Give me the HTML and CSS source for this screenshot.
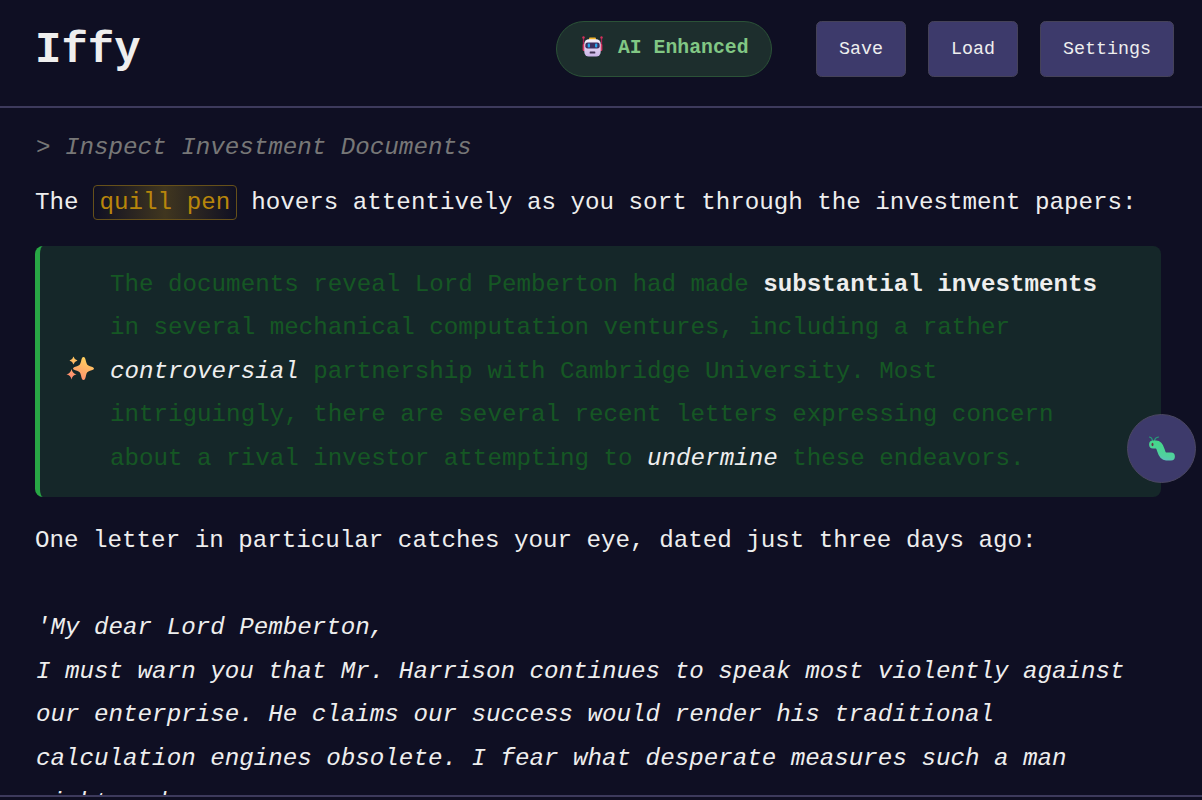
FILE: index.html
```html
<!DOCTYPE html>
<html lang="en">
<head>
<meta charset="utf-8">
<title>Iffy</title>
<link rel="stylesheet" href="styles.css">
</head>
<body>
<header class="header">
  <h1 class="title">Iffy</h1>
  <div class="controls">
    <div class="status">
      <svg class="robot" viewBox="0 0 27 24" aria-hidden="true">
        <defs><linearGradient id="face" x2="0" y2="1"><stop stop-color="#f6f0fa"/><stop offset="1" stop-color="#c9b2e6"/></linearGradient></defs>
        <path d="M4.500 3v12M22.500 3v12" stroke="#a81f50" stroke-width="1.300"/>
        <circle cx="4.500" cy="2.500" r="1.200" fill="#d3325b"/><circle cx="22.500" cy="2.500" r="1.200" fill="#d3325b"/>
        <rect x="3.700" y="9" width="3" height="7" rx="1" fill="#d63863"/><rect x="20.300" y="9" width="3" height="7" rx="1" fill="#d63863"/>
        <rect x="10" y="2.500" width="7" height="3" rx="1" fill="#f5b52a"/>
        <rect x="5.300" y="4.200" width="16.400" height="17.300" rx="4.500" fill="url(#face)"/>
        <rect x="6.300" y="7.500" width="14.400" height="6" rx="2.300" fill="#3c3060"/>
        <rect x="8.700" y="8.600" width="2.300" height="3.800" rx="1" fill="#27a8ef"/><rect x="16" y="8.600" width="2.300" height="3.800" rx="1" fill="#27a8ef"/>
        <rect x="10.700" y="16.500" width="5.600" height="2" rx=".6" fill="#403052"/>
      </svg>
      <span>AI Enhanced</span>
    </div>
    <button class="button">Save</button>
    <button class="button">Load</button>
    <button class="button">Settings</button>
  </div>
</header>
<main class="story">
  <p class="command">&gt; Inspect Investment Documents</p>
  <p class="line">The <span class="item">quill pen</span> hovers attentively as you sort through the investment papers:</p>
  <section class="enhanced">
    <svg class="sparkles" viewBox="0 0 30 28" aria-hidden="true">
      <defs><linearGradient id="gold" gradientUnits="userSpaceOnUse" x1="20" y1="2" x2="10" y2="26"><stop stop-color="#ffd45d"/><stop offset="1" stop-color="#ff8872"/></linearGradient></defs>
      <g fill="url(#gold)">
        <path d="M17.500 2c1.400 0 2 2 2.500 4.500.7 3 1.500 3.800 4 4.700C26.500 12 28 12.500 28 13.500s-1.500 1.500-4 2.300c-2.500.9-3.300 1.700-4 4.700C19.500 23 18.900 25 17.500 25s-2-2-2.500-4.500c-.7-3-1.500-3.800-4-4.700-2.500-.8-4-1.300-4-2.300s1.500-1.500 4-2.300c2.500-.9 3.300-1.700 4-4.700C15.500 4 16.100 2 17.500 2Z"/>
        <path d="M7.500 1.500q.8 3.200 4 4-3.200.8-4 4-.8-3.200-4-4 3.200-.8 4-4Z"/>
        <path d="M5.500 14q.9 4.400 5 5.300-4.100.9-5 5.300-.9-4.400-5-5.300 4.100-.9 5-5.300Z"/>
      </g>
    </svg>
    <p class="passage">The documents reveal Lord Pemberton had made <strong>substantial investments</strong><br>in several mechanical computation ventures, including a rather<br><em>controversial</em> partnership with Cambridge University. Most<br>intriguingly, there are several recent letters expressing concern<br>about a rival investor attempting to <em>undermine</em> these endeavors.</p>
  </section>
  <p class="line">One letter in particular catches your eye, dated just three days ago:<br><br><em class="letter">'My dear Lord Pemberton,<br>I must warn you that Mr. Harrison continues to speak most violently against<br>our enterprise. He claims our success would render his traditional<br>calculation engines obsolete. I fear what desperate measures such a man<br>might undo.</em></p>
</main>
<footer class="footer"></footer>
<button class="debug" aria-label="Debug">
  <svg class="bug" viewBox="0 0 30 30" aria-hidden="true">
    <defs><linearGradient id="worm" gradientUnits="userSpaceOnUse" x1="17" y1="10" x2="13" y2="29"><stop stop-color="#45d88b"/><stop offset=".6" stop-color="#51d09f"/><stop offset="1" stop-color="#65b5d5"/></linearGradient></defs>
    <path d="M5.500 6.500Q5 3.500 2.500 3M7.500 6.500Q8 3.500 11.500 3" fill="none" stroke="#279b79" stroke-width="1.200" stroke-linecap="round"/>
    <path d="M6 10.500H9C15.500 10.500 12.500 22.500 19 22.500H24" fill="none" stroke="url(#worm)" stroke-width="7.800" stroke-linecap="round" stroke-linejoin="round"/>
    <ellipse cx="5.500" cy="10.500" rx="1" ry="1.800" fill="#673746"/>
  </svg>
</button>
</body>
</html>
```
FILE: styles.css
```css
* { box-sizing: border-box; }
body { margin: 0; height: 100vh; overflow: hidden; display: flex; flex-direction: column; background: #0f0f23; color: #eee; font: 24.2px/43.56px "Courier New", "Liberation Mono", monospace; }
p, h1 { margin: 0; }
.header { flex: 0 0 108px; display: flex; justify-content: space-between; align-items: flex-start; padding: 21px 28px 0 35px; border-bottom: 2px solid #3d3a5c; }
.title { font-size: 44px; line-height: 58px; }
.controls { display: flex; gap: 22px; }
.status { display: flex; width: 216px; height: 56px; margin-right: 22px; padding: 0 22px; border: 1px solid #2b5237; border-radius: 28px; background: #1d2e2d; color: #81c784; font-size: 19.8px; font-weight: bold; line-height: 53px; white-space: nowrap; }
.robot { width: 27px; height: 24px; margin: 13px 12px 0 0; flex: none; }
.button { height: 56px; padding: 0 22px; border: 1px solid #454258; border-radius: 5.500px; background: #3d3a6b; color: #eee; font: 18.333px "Courier New", "Liberation Mono", monospace; }
.story { flex: 1; min-height: 0; overflow: hidden; padding: 17.500px 35px 0; white-space: nowrap; }
.command { margin-bottom: 11.500px; padding-left: 1px; color: #777; font-style: italic; }
.item { padding: 3px 5.500px; border: 1px solid #66501a; border-radius: 4px; background: linear-gradient(90deg, transparent, #40361f, transparent) border-box; color: #b8860b; }
.enhanced { display: flex; align-items: center; width: 1126px; height: 251px; margin: 21.500px 0 22.500px; padding-left: 26px; border-left: 5px solid #28a745; border-radius: 8px; background: #152729; color: #155724; }
.sparkles { width: 30px; height: 28px; flex: none; margin: 0 14px 4px 0; }
.passage { padding-top: 1px; }
.passage strong, .passage em { color: #eee; }
.letter { display: inline-block; padding-left: 1px; }
.footer { flex: 0 0 5px; border-top: 2px solid #3d3a5c; }
.debug { position: absolute; right: 6px; top: 414px; width: 69px; height: 69px; display: grid; place-items: center; padding: 0; border: 1px solid #4b4761; border-radius: 50%; background: #3d3a6b; }
.bug { width: 30px; height: 30px; }
```
